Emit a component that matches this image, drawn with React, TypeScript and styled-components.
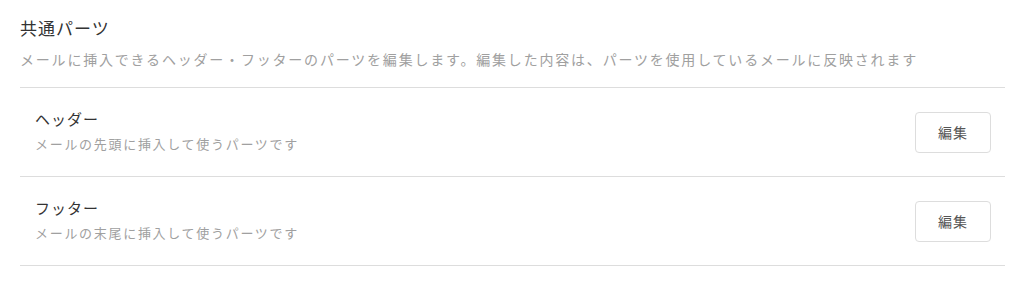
import styled, { createGlobalStyle } from 'styled-components'

const GlobalStyle = createGlobalStyle`
  body {
    margin: 0;
    background: #fff;
    font-family: 'Noto Sans CJK JP', 'Noto Sans', sans-serif;
  }
`

const parts = [
  { name: 'ヘッダー', desc: 'メールの先頭に挿入して使うパーツです' },
  { name: 'フッター', desc: 'メールの末尾に挿入して使うパーツです' },
]

export default function App () {
  return (
    <>
      <GlobalStyle />
      <Section>
        <Title>共通パーツ</Title>
        <Lead>メールに挿入できるヘッダー・フッターのパーツを編集します。編集した内容は、パーツを使用しているメールに反映されます</Lead>
        <List>
          {parts.map(p => (
            <Row key={p.name}>
              <Info>
                <Name>{p.name}</Name>
                <Desc>{p.desc}</Desc>
              </Info>
              <EditButton>編集</EditButton>
            </Row>
          ))}
        </List>
      </Section>
    </>
  )
}

const Section = styled.section`
  padding: 15px 19px 0 20px;
`

const Title = styled.h2`
  margin: 0;
  font-size: 17px;
  font-weight: 400;
  line-height: 26px;
  letter-spacing: 1px;
  color: #333;
`

const Lead = styled.p`
  margin: 7px 0 0;
  font-size: 14px;
  line-height: 22px;
  letter-spacing: 1.8px;
  color: #a0a0a0;
`

const List = styled.div`
  margin-top: 17px;
  border-top: 1px solid #ddd;
`

const Row = styled.div`
  display: flex;
  align-items: center;
  justify-content: space-between;
  height: 88px;
  padding: 0 14px 0 15px;
  border-bottom: 1px solid #ddd;
`

const Info = styled.div`
  display: flex;
  flex-direction: column;
  gap: 6px;
  padding-bottom: 3px;
`

const Name = styled.div`
  font-size: 15px;
  line-height: 20px;
  letter-spacing: 1px;
  color: #333;
`

const Desc = styled.div`
  font-size: 13px;
  line-height: 18px;
  letter-spacing: 1.7px;
  color: #a0a0a0;
`

const EditButton = styled.button`
  all: unset;
  box-sizing: border-box;
  width: 76px;
  height: 41px;
  border: 1px solid #ddd;
  border-radius: 4px;
  text-align: center;
  line-height: 39px;
  font-size: 14px;
  letter-spacing: 1px;
  color: #555;
  cursor: pointer;
`
